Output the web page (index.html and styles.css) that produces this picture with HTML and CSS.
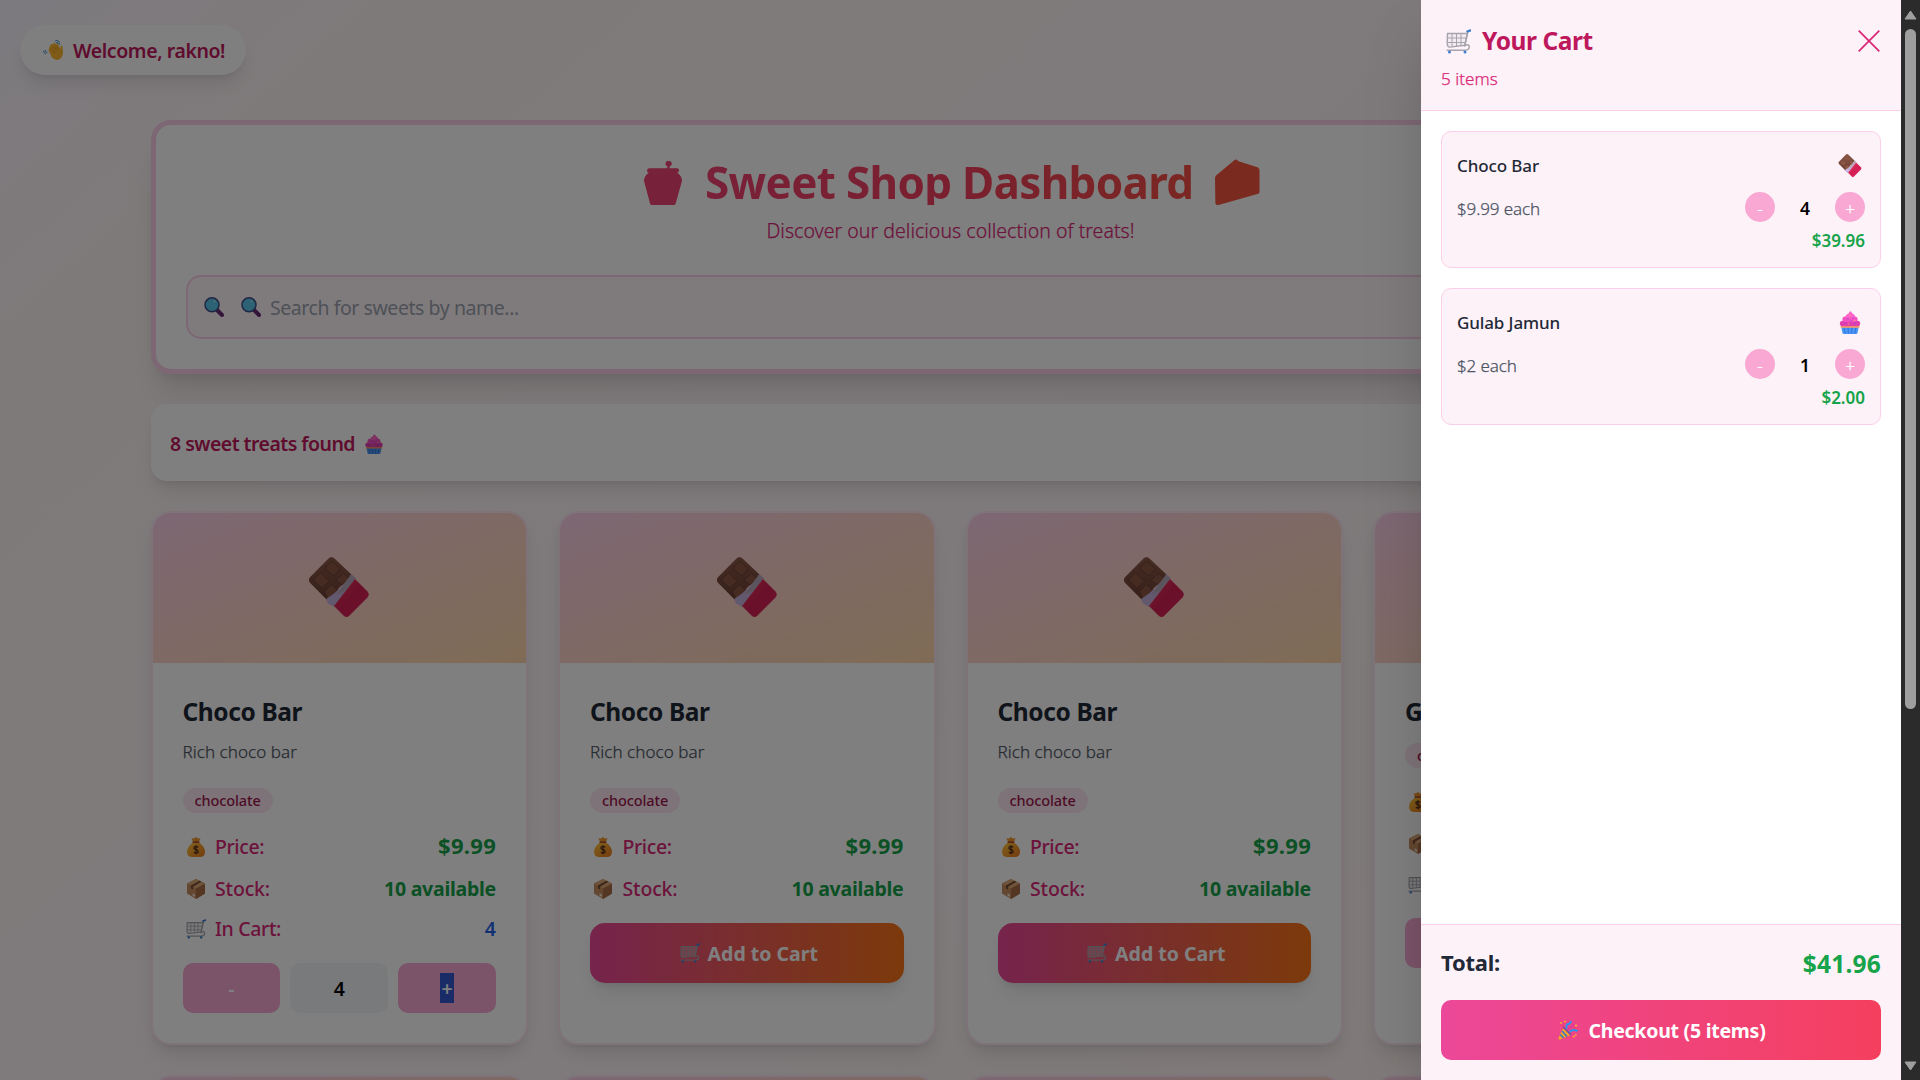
FILE: index.html
```html
<!DOCTYPE html>
<html lang="en">
<head>
<meta charset="utf-8">
<title>Sweet Shop Dashboard</title>
<link rel="stylesheet" href="styles.css">
</head>
<body>
<svg class="sprite" aria-hidden="true">
  <defs>
    <linearGradient id="red" x1="0" y1="0" x2="1" y2="1"><stop offset="0" stop-color="#f03a50"/><stop offset=".5" stop-color="#d21f55"/><stop offset="1" stop-color="#e0245c"/></linearGradient>
    <linearGradient id="brown" x1="0" y1="0" x2="0" y2="1"><stop offset="0" stop-color="#8a5a4a"/><stop offset="1" stop-color="#6f4034"/></linearGradient>
    <linearGradient id="gold" x1="0" y1="0" x2="1" y2="1"><stop offset="0" stop-color="#ffc83c"/><stop offset="1" stop-color="#e8761c"/></linearGradient>
  </defs>
  <symbol id="choco" viewBox="0 0 60 60">
    <path d="M19.5 1.5Q22.500-1.500 25.500 1.500L43 18 18 43 1.200 26Q-1.500 23 1.200 20Z" fill="url(#brown)"/>
    <path d="M22.500 4 31.500 12 25 19 15.500 11.500ZM11.500 15.500 20.500 24 13 31 4 23ZM34.500 16 41 21.500 33.500 28 27 23.500ZM22.500 27.500 29.500 33.500 19 42 15.500 34.500Z" fill="#8c5645" stroke="#653a30" stroke-width=".8" stroke-linejoin="round"/>
    <path d="M42.500 17 47 21.500 25 50 19 46.500 17 42Q31 34 42.500 17Z" fill="#c6b2dc"/>
    <path d="M42 18 46.500 21 36 34 27 38Z" fill="#b9a9b8"/>
    <path d="M46 22 58.500 34.500Q61 37.500 58.500 40.500L40.500 58.500Q37.500 61.500 34.500 58.500L25 49Z" fill="url(#red)"/>
  </symbol>
  <symbol id="cupcake" viewBox="0 0 20 22">
    <path d="M1.500 14.500H18.500L17.200 21Q17 22 16 22H4Q3 22 2.800 21Z" fill="#4a95f5"/>
    <path d="M4.500 16 5.300 21.500M8.200 16 8.400 21.500M11.800 16 11.600 21.500M15.500 16 14.700 21.500" stroke="#3273d8" stroke-width=".9" fill="none"/>
    <path d="M1 14.200H19V16H1.300Z" fill="#ffa25c"/>
    <rect x=".3" y="9.300" width="19.400" height="5.400" rx="2.700" fill="#e23fae"/>
    <rect x="2.800" y="5.300" width="14.400" height="5.300" rx="2.600" fill="#f551c0"/>
    <path d="M5.500 6.500Q5.500 3.500 8.500 2.700 9.600 0 11 .4 12 2.500 14.200 3.700 15.500 5 14.500 6.500Z" fill="#ff62c8"/>
    <path d="M7.500 7.500h1M12.500 6.500h1M5 11.500h1M10.500 9.500h1M14.500 11.800h1" stroke="#8d45df" stroke-width="1.100"/>
    <path d="M9.500 4.300h1M14 9h1M8 12.500h1" stroke="#ffa75b" stroke-width="1"/>
  </symbol>
  <symbol id="cart" viewBox="0 0 25 24">
    <g fill="none" stroke="#a7a3ad">
      <path d="M1.500 4H21.300L18.700 15.800 3.800 17.600Q1.400 17.600 1.200 14Z" fill="#dcdbe0" fill-opacity=".3" stroke-width="1.400" stroke-linejoin="round"/>
      <path d="M6 4V17M10.500 4V16.800M15 4V16.400M1.500 8.500H20.200M1.600 13H19.400" stroke-width="1"/>
      <path d="M24 1.200 22 2 18.800 16.200Q23.500 14 23.300 17.500 23 20.800 18.500 20.800H1.200" stroke-width="1.500" stroke-linecap="round"/>
    </g>
    <path d="M21.300 2 24.500.9" stroke="#3f7fd0" stroke-width="2.200" stroke-linecap="round"/>
    <circle cx="3.500" cy="22.500" r="1.500" fill="#3f7fd0"/><circle cx="19" cy="22.500" r="1.500" fill="#3f7fd0"/>
  </symbol>
  <symbol id="bag" viewBox="0 0 18 20">
    <path d="M4.500 1.300 7 1.500 9 0 11 1.500 13.500 1.300 12 5H6Z" fill="#f2962c"/>
    <path d="M6 5.500H12Q18 10 18 14.500 18 20 12.500 20H5.500Q0 20 0 14.500 0 10 6 5.500Z" fill="url(#gold)"/>
    <rect x="5.500" y="4.300" width="7" height="1.800" rx=".9" fill="#b3572c"/>
    <path d="M11.300 10.300Q9 8.800 7.200 10 6.200 12 9 12.700 12 13.500 11 15.400 9 16.700 6.800 15.200M9 8.300V17.300" fill="none" stroke="#5d3320" stroke-width="1.300"/>
  </symbol>
  <symbol id="box" viewBox="0 0 18 20">
    <path d="M9 0 18 4.500V14.500L9 20 0 14.500V4.500Z" fill="#c98f60"/>
    <path d="M9 9.500 18 4.500V14.500L9 20Z" fill="#a86c46"/>
    <path d="M9 0 18 4.500 9 9.500 0 4.500Z" fill="#dba876"/>
    <path d="M3.800 6.600 12.500 1.800 14.500 2.800 6 7.800V10.500L3.800 9.300Z" fill="#7c4c36"/>
    <path d="M5.500 14.300 8 15.600V18L5.500 16.800Z" fill="#efdccb"/>
  </symbol>
  <symbol id="wave" viewBox="0 0 20 20">
    <path d="M5.500 10.500 7 5.500Q8.300 3 9.300 4.600L10.500 3.300Q12 2.200 12.800 4L14 4Q15.500 3.800 15.800 6L17.500 9V6.500Q18.200 4.500 19.500 6.300L20 13Q19.500 18.500 15 19.800 11.500 20.500 9 17.500Z" fill="#fdb62f"/>
    <path d="M8 8.500 12.500 13M10 6.500 14 10.500M12.800 6 16 9.500" stroke="#e08c18" stroke-width=".8"/>
    <path d="M12 1.200Q14-.3 15.500 1 17 2.500 16.200 4.800M13 2.600Q15 1.800 15 4M.6 10.500Q.3 13 3 14.200M2.400 10Q2 12 4.500 12.800" fill="none" stroke="#4694c8" stroke-width="1"/>
  </symbol>
  <symbol id="lens" viewBox="0 0 20 20">
    <path d="M13 13 18 18" stroke="#6b2c74" stroke-width="4" stroke-linecap="round"/>
    <circle cx="8" cy="7.800" r="7" fill="#58c4e6" stroke="#3f4d8a" stroke-width="1.500"/>
    <circle cx="10.500" cy="4.500" r="1" fill="#a9ecf8"/>
  </symbol>
  <symbol id="party" viewBox="0 0 20 20">
    <path d="M5.500 7.500 12.500 15 2 19.500Q.2 20 .5 18Z" fill="#f5a524"/>
    <path d="M4 11 9 16.500M2.300 14.500 5.500 18" stroke="#3f74c9" stroke-width="1.700"/>
    <path d="M5 7 13 15" stroke="#6a4aa8" stroke-width="1.500"/>
    <path d="M9 8.500Q7.500 5 10 4 12 4.500 13 1M11.500 12Q15 8.500 19.500 11.200" fill="none" stroke="#2e94ea" stroke-width="2"/>
    <path d="M10 10 16.500 3.500" stroke="#e0379c" stroke-width="1.600"/>
    <path d="M2 3h2M6 1.500h1.800M17 5.500h2M14.800 16.500h2M17 15h1.500" stroke="#f7b32b" stroke-width="1.600"/>
    <path d="M4.500 5.500h1.500M15.500 8h1.500" stroke="#ea3f6c" stroke-width="1.500"/>
  </symbol>
</svg>

<div class="window">
  <main class="page">
    <header class="topbar">
      <div class="welcome"><svg class="ico"><use href="#wave"/></svg><span>Welcome, rakno!</span></div>
    </header>

    <div class="container">
      <section class="hero">
        <h1 class="hero-title">
          <svg class="jar" viewBox="0 0 38 44"><path fill="#f04374" d="M25 0A2.700 2.700 0 0 1 25.800 5.300L25.500 7.300H33Q35.200 7.500 35 9.500 34.800 11.500 33.300 11.800 38 15 38 20L31.500 43Q31.200 44 30 44H8Q6.500 44 6.200 43L0 20Q0 15 4.700 11.800 3 11.500 3 9.500 3.200 7.500 5 7.300H23L23.500 5.200A2.700 2.700 0 0 1 25 0Z"/></svg>
          <span class="hero-text">Sweet Shop Dashboard</span>
          <svg class="cake" viewBox="0 0 45 46"><path fill="#f6543e" d="M0 19Q0 17.500 1 16.500L19 1.500Q21-.8 23.500 2.300L42.500 8.300Q44.500 9.500 44.500 11V33Q44.500 34.300 43.300 34.800L3.500 46Q.5 46.500.4 44Z"/></svg>
        </h1>
        <p class="hero-sub">Discover our delicious collection of treats!</p>
        <div class="search">
          <svg class="ico"><use href="#lens"/></svg>
          <svg class="ico ico-second"><use href="#lens"/></svg>
          <span class="placeholder">Search for sweets by name...</span>
        </div>
      </section>

      <section class="results"><span>8 sweet treats found</span><svg class="cup"><use href="#cupcake"/></svg></section>

      <section class="grid">
        <article class="card">
          <div class="thumb"><svg><use href="#choco"/></svg></div>
          <div class="body">
            <h2 class="name">Choco Bar</h2>
            <p class="desc">Rich choco bar</p>
            <span class="chip">chocolate</span>
            <div class="facts">
              <div class="row row-price"><svg class="ico"><use href="#bag"/></svg><span class="label l-price">Price:</span><b class="price">$9.99</b></div>
              <div class="row"><svg class="ico"><use href="#box"/></svg><span class="label">Stock:</span><b class="stock">10 available</b></div>
              <div class="row"><svg class="ico"><use href="#cart"/></svg><span class="label l-cart">In Cart:</span><b class="count">4</b></div>
            </div>
            <div class="stepper"><button class="step">-</button><span class="amount">4</span><button class="step"><span class="selected">+</span></button></div>
          </div>
        </article>
        <article class="card">
          <div class="thumb"><svg><use href="#choco"/></svg></div>
          <div class="body">
            <h2 class="name">Choco Bar</h2>
            <p class="desc">Rich choco bar</p>
            <span class="chip">chocolate</span>
            <div class="facts">
              <div class="row row-price"><svg class="ico"><use href="#bag"/></svg><span class="label l-price">Price:</span><b class="price">$9.99</b></div>
              <div class="row"><svg class="ico"><use href="#box"/></svg><span class="label">Stock:</span><b class="stock">10 available</b></div>
            </div>
            <button class="add"><svg class="ico"><use href="#cart"/></svg><span>Add to Cart</span></button>
          </div>
        </article>
        <article class="card">
          <div class="thumb"><svg><use href="#choco"/></svg></div>
          <div class="body">
            <h2 class="name">Choco Bar</h2>
            <p class="desc">Rich choco bar</p>
            <span class="chip">chocolate</span>
            <div class="facts">
              <div class="row row-price"><svg class="ico"><use href="#bag"/></svg><span class="label l-price">Price:</span><b class="price">$9.99</b></div>
              <div class="row"><svg class="ico"><use href="#box"/></svg><span class="label">Stock:</span><b class="stock">10 available</b></div>
            </div>
            <button class="add"><svg class="ico"><use href="#cart"/></svg><span>Add to Cart</span></button>
          </div>
        </article>
        <article class="card">
          <div class="thumb"></div>
          <div class="body">
            <h2 class="name">Gulab Jamun</h2>
            <span class="chip">cake</span>
            <div class="facts">
              <div class="row row-price"><svg class="ico"><use href="#bag"/></svg></div>
              <div class="row"><svg class="ico"><use href="#box"/></svg></div>
              <div class="row"><svg class="ico"><use href="#cart"/></svg></div>
            </div>
            <div class="stepper"><button class="step"></button><span class="amount"></span><button class="step"></button></div>
          </div>
        </article>
        <article class="card"><div class="thumb"></div></article>
        <article class="card"><div class="thumb"></div></article>
        <article class="card"><div class="thumb"></div></article>
        <article class="card"><div class="thumb"></div></article>
      </section>
    </div>

    <div class="overlay">
      <aside class="drawer">
        <header class="drawer-head">
          <div class="drawer-line">
            <h2 class="drawer-title"><svg><use href="#cart"/></svg><span>Your Cart</span></h2>
            <svg class="close" viewBox="0 0 22 22"><path d="M.7.700 21.300 21.300M21.300.700.700 21.300"/></svg>
          </div>
          <p class="drawer-sub">5 items</p>
        </header>
        <div class="items">
          <div class="item">
            <div class="item-row item-top"><h3>Choco Bar</h3><svg class="item-ico"><use href="#choco"/></svg></div>
            <div class="item-row item-mid"><span class="each">$9.99 each</span><div class="qty"><button>-</button><span>4</span><button>+</button></div></div>
            <div class="item-sum">$39.96</div>
          </div>
          <div class="item">
            <div class="item-row item-top"><h3>Gulab Jamun</h3><svg class="item-ico"><use href="#cupcake"/></svg></div>
            <div class="item-row item-mid"><span class="each">$2 each</span><div class="qty"><button>-</button><span>1</span><button>+</button></div></div>
            <div class="item-sum">$2.00</div>
          </div>
        </div>
        <footer class="drawer-foot">
          <div class="total"><span class="total-label">Total:</span><span class="total-sum">$41.96</span></div>
          <button class="checkout"><svg class="ico"><use href="#party"/></svg><span>Checkout (5 items)</span></button>
        </footer>
      </aside>
    </div>
  </main>

  <div class="scrollbar">
    <svg class="arrow" viewBox="0 0 13 10"><path d="M6.500 1 12 9H1Z"/></svg>
    <div class="thumbbar"></div>
    <svg class="arrow arrow-down" viewBox="0 0 13 10"><path d="M6.500 9 1 1H12Z"/></svg>
  </div>
</div>
</body>
</html>
```
FILE: styles.css
```css
* { box-sizing: border-box; margin: 0; padding: 0; }
body { font-family: "Noto Sans", "Open Sans", sans-serif; overflow: hidden; }
svg { display: block; flex: none; }
button { border: 0; font-family: inherit; color: #fff; }
.sprite { position: absolute; width: 0; height: 0; }
.ico { width: 20px; height: 20px; }

.window { display: flex; width: 1920px; height: 1080px; overflow: hidden; }
.page {
  position: relative; width: 1901px; height: 1080px; overflow: hidden;
  background: linear-gradient(to bottom right, #faf5ff 0, #fef5f5 10%, #fdf3f6 45%, #fff7ed 100%) 0 0 / 1901px 1669px;
}

.topbar { display: flex; height: 120px; padding: 25px 20px 0; }
.welcome {
  display: flex; align-items: center; gap: 10px; width: 226px; height: 50px; padding-left: 23px;
  border-radius: 25px; background: #fff; color: #be185d;
  font-size: 19.5px; font-weight: 600; letter-spacing: -.42px; white-space: nowrap;
  box-shadow: 0 12px 19px -4px rgba(0,0,0,.1), 0 5px 8px -5px rgba(0,0,0,.1);
}
.welcome span { padding-top: 1px; }

.container { width: 1600px; margin-left: 150.5px; }
.hero {
  height: 254px; padding: 30px; border: 5px solid #fbcfe8; border-radius: 20px; background: #fff;
  box-shadow: 0 25px 31px -6px rgba(0,0,0,.1), 0 10px 13px -8px rgba(0,0,0,.1);
}
.hero-title {
  display: flex; justify-content: center; height: 50px; margin-bottom: 10px; padding-left: 3px;
  font-size: 44px; font-weight: 700; line-height: 54px; letter-spacing: -.68px; white-space: nowrap;
  background: linear-gradient(to right, #ec4899, #f43f5e 50%, #f97316);
  -webkit-background-clip: text; background-clip: text; color: transparent;
}
.hero-text { margin: 0 22px 0 23.500px; }
.jar { width: 38px; height: 44px; margin-top: 6px; }
.cake { width: 45px; height: 46px; margin-top: 4px; }
.hero-sub {
  height: 30px; margin-bottom: 30px; text-align: center; line-height: 31px;
  font-size: 19.5px; font-weight: 300; letter-spacing: .03px; color: #db2777; -webkit-text-stroke: .25px #db2777;
}
.search {
  display: flex; align-items: center; height: 64px; padding-left: 16px;
  border: 2px solid #fbcfe8; border-radius: 15px; background: #fef7f8;
}
.ico-second { margin: 0 9.500px 0 17px; }
.placeholder { padding-top: 1px; font-size: 19.5px; letter-spacing: -.44px; color: #9ca3af; }

.results {
  display: flex; align-items: center; gap: 10px; height: 77px; margin: 30px 0; padding-left: 19.5px;
  border-radius: 16px; background: #fff; color: #be185d;
  font-size: 19.5px; font-weight: 600; letter-spacing: -.53px;
  box-shadow: 0 12px 19px -4px rgba(0,0,0,.1), 0 5px 8px -5px rgba(0,0,0,.1);
}
.results span { padding-top: 2px; }
.cup { width: 18px; height: 20px; margin-top: 3px; }

.grid { display: grid; grid-template-columns: repeat(4, 1fr); gap: 30px; }
.card {
  height: 534px; overflow: hidden; border: 2px solid #fce7f3; border-radius: 20px; background: #fff;
  box-shadow: 0 12px 19px -4px rgba(0,0,0,.1), 0 5px 8px -5px rgba(0,0,0,.1);
}
.thumb {
  display: flex; align-items: center; justify-content: center; height: 150px; padding-bottom: 2px;
  background: linear-gradient(to bottom right, #fbcfe8, #fed7aa);
}
.thumb svg { width: 60px; height: 60px; }
.body { display: flex; flex-direction: column; padding: 30px; }
.name {
  height: 35px; margin-bottom: 10px; line-height: 38px;
  font-size: 24.5px; font-weight: 700; letter-spacing: -.4px; color: #1f2937;
}
.desc {
  height: 25px; margin-bottom: 20px; line-height: 27px;
  font-size: 17px; font-weight: 300; letter-spacing: .06px; color: #4b5563; -webkit-text-stroke: .25px #4b5563;
}
.chip {
  width: max-content; height: 25px; margin-top: 5px; padding: 0 12px; border-radius: 13px;
  line-height: 25px; font-size: 14.5px; font-weight: 500; letter-spacing: -.1px;
  background: #fce7f3; color: #9d174d;
}
.facts { display: flex; flex-direction: column; gap: 10px; margin-top: 16px; }
.row {
  display: flex; align-items: center; height: 30px; padding-left: 3px;
  font-size: 19.5px; font-weight: 500; line-height: 30px; color: #db2777;
}
.row-price { height: 35px; }
.label { margin-left: 9.500px; letter-spacing: -.15px; }
.l-price { letter-spacing: -.4px; }
.l-cart { letter-spacing: -.34px; }
.row b { margin-left: auto; font-weight: 700; }
.row .price { margin-bottom: 4px; font-size: 22px; letter-spacing: .28px; color: #16a34a; }
.stock { letter-spacing: -.25px; color: #16a34a; }
.row .count { font-weight: 600; color: #2563eb; }
.stepper { display: grid; grid-template-columns: repeat(3, 1fr); gap: 10px; margin-top: 19px; }
.step, .amount {
  display: flex; align-items: center; justify-content: center; height: 50px; border-radius: 10px;
  font-size: 19.5px; font-weight: 600;
}
.step { background: #f9a8d4; }
.amount { background: #f3f4f6; color: #000; }
.selected { width: 14px; height: 30px; line-height: 31px; text-align: center; background: #3358cf; }
.add {
  display: flex; align-items: center; justify-content: center; gap: 8px; width: 100%; height: 60px;
  margin-top: 19px; padding-left: 4px; border-radius: 15px; background: linear-gradient(to right, #ec4899, #f97316);
  font-size: 19.5px; font-weight: 700;
  box-shadow: 0 12px 19px -4px rgba(0,0,0,.1), 0 5px 8px -5px rgba(0,0,0,.1);
}

.overlay {
  position: absolute; inset: 0; display: flex; justify-content: flex-end;
  background: rgba(0,0,0,.5);
}
.drawer {
  display: flex; flex-direction: column; width: 480px; height: 100%; background: #fff;
  box-shadow: 0 31px 62px -15px rgba(0,0,0,.25);
}
.drawer-head { height: 111px; padding: 20px 20px 0; border-bottom: 1px solid #fbcfe8; background: #fdf2f8; }
.drawer-line { display: flex; align-items: center; justify-content: space-between; height: 44px; padding-right: 1px; }
.drawer-title {
  display: flex; align-items: center; gap: 11px; padding-left: 5px; line-height: 32px; margin-bottom: 2px;
  font-size: 24.5px; font-weight: 700; letter-spacing: -.45px; color: #be185d;
}
.drawer-title svg { width: 25px; height: 25px; }
.close { width: 22px; height: 22px; margin-bottom: 3px; fill: none; stroke: #db2777; stroke-width: 1.700; }
.drawer-sub { line-height: 30px; font-size: 17px; font-weight: 300; letter-spacing: .04px; color: #db2777; -webkit-text-stroke: .25px #db2777; }

.items { display: flex; flex: 1; flex-direction: column; gap: 20px; padding: 20px; }
.item { height: 137px; padding: 15px; border: 1px solid #fbcfe8; border-radius: 10px; background: #fdf2f8; }
.item-row { display: flex; justify-content: space-between; }
.item-top { height: 35px; padding-right: 3px; }
.item h3 { line-height: 38px; font-size: 17px; font-weight: 500; letter-spacing: -.12px; color: #1f2937; }
.item-ico { width: 24px; height: 23px; margin-top: 7px; }
.item-mid { height: 40px; padding-top: 10px; }
.each { line-height: 33px; font-size: 17px; font-weight: 300; letter-spacing: -.12px; color: #4b5563; -webkit-text-stroke: .25px #4b5563; }
.qty { display: flex; gap: 10px; }
.qty button {
  width: 30px; height: 30px; border-radius: 50%; background: #f9a8d4;
  font-size: 17px; font-weight: 300; line-height: 33px; text-align: center; -webkit-text-stroke: .25px #fff;
}
.qty span { width: 40px; line-height: 32px; text-align: center; font-size: 17.5px; font-weight: 600; color: #000; }
.item-sum { line-height: 38px; text-align: right; font-size: 17px; font-weight: 600; color: #16a34a; }

.drawer-foot { height: 156px; padding: 20px; border-top: 1px solid #fbcfe8; background: #fdf2f8; }
.total { display: flex; justify-content: space-between; height: 35px; margin-bottom: 20px; font-weight: 700; }
.total-label { line-height: 35px; font-size: 22px; letter-spacing: -.23px; color: #1f2937; }
.total-sum { line-height: 38px; font-size: 24.500px; letter-spacing: .2px; color: #16a34a; }
.checkout {
  display: flex; align-items: center; justify-content: center; gap: 10px; width: 100%; height: 60px; padding-left: 2px;
  border-radius: 10px; background: linear-gradient(to right, #ec4899, #f43f5e);
  font-size: 19.5px; font-weight: 700; letter-spacing: -.25px;
}

.scrollbar { display: flex; flex-direction: column; align-items: center; width: 19px; padding: 10px 0 9px; background: #2b2b2b; }
.arrow { width: 13px; height: 10px; fill: #9f9f9f; stroke: #9f9f9f; stroke-width: 1; stroke-linejoin: round; }
.thumbbar { width: 11px; height: 680px; margin-top: 9px; border-radius: 6px; background: #9f9f9f; }
.arrow-down { margin-top: auto; }
```
